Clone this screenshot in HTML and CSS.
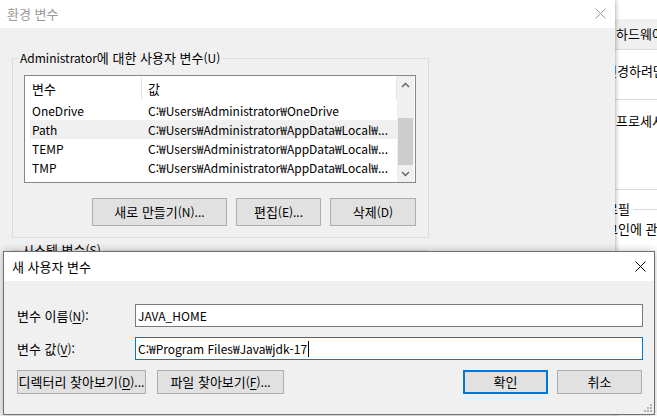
FILE: index.html
```html
<!DOCTYPE html>
<html lang="ko">
<head>
<meta charset="utf-8">
<title>환경 변수</title>
<link rel="stylesheet" href="styles.css">
</head>
<body>
<div class="sys">
  <div class="sys-top"></div>
  <div class="sys-tabs"><span class="k">하드웨어</span></div>
  <div class="sys-sec1"><span class="k cut10">변경하려면</span></div>
  <div class="sys-sec2"><span class="k cut2">프로세서</span></div>
  <div class="sys-grp"><span class="k cut21">프로필</span><span class="sys-line"></span></div>
  <div class="sys-txt"><span class="k cut21">로그인에 관련된</span></div>
</div>

<div class="env">
  <div class="env-title">
    <span class="k">환경 변수</span>
    <svg class="env-close" width="11" height="11" viewBox="0 0 11 11"><path d="M0.5 0.5 L10.5 10.5 M10.5 0.5 L0.5 10.5" stroke="#9a9a9a" stroke-width="1" fill="none"/></svg>
  </div>
  <fieldset class="group">
    <legend>Administrator<span class="k">에 대한 사용자 변수</span>(U)</legend>
    <div class="list">
      <div class="cols">
        <div class="list-head">
          <div class="hcell h1"><span class="k">변수</span></div>
          <div class="hcell h2"><span class="k">값</span></div>
        </div>
        <div class="rows">
          <div class="row"><span class="c">OneDrive</span><span class="c">C:₩Users₩Administrator₩OneDrive</span></div>
          <div class="row sel"><span class="c">Path</span><span class="c">C:₩Users₩Administrator₩AppData₩Local₩...</span></div>
          <div class="row"><span class="c">TEMP</span><span class="c">C:₩Users₩Administrator₩AppData₩Local₩...</span></div>
          <div class="row"><span class="c">TMP</span><span class="c">C:₩Users₩Administrator₩AppData₩Local₩...</span></div>
        </div>
      </div>
      <div class="sbar">
        <div class="sbtn"><svg width="9" height="6" viewBox="0 0 9 6"><path d="M1 5 L4.5 1.5 L8 5" stroke="#606060" stroke-width="1.4" fill="none"/></svg></div>
        <div class="strack"><div class="thumb"></div></div>
        <div class="sbtn"><svg width="9" height="6" viewBox="0 0 9 6"><path d="M1 1 L4.5 4.5 L8 1" stroke="#606060" stroke-width="1.4" fill="none"/></svg></div>
      </div>
    </div>
    <div class="btnrow">
      <button class="btn w135"><span class="k">새로 만들기</span>(N)...</button>
      <button class="btn w85"><span class="k">편집</span>(E)...</button>
      <button class="btn w86"><span class="k">삭제</span>(D)</button>
    </div>
  </fieldset>
  <fieldset class="group group2">
    <legend><span class="k">시스템 변수</span>(S)</legend>
  </fieldset>
</div>

<div class="dlg">
  <div class="dlg-title">
    <span class="k">새 사용자 변수</span>
    <svg class="dlg-close" width="11" height="11" viewBox="0 0 11 11"><path d="M0.5 0.5 L10.5 10.5 M10.5 0.5 L0.5 10.5" stroke="#000" stroke-width="1" fill="none"/></svg>
  </div>
  <div class="dlg-body">
    <div class="field">
      <label><span class="k">변수 이름</span>(<u>N</u>):</label>
      <div class="input">JAVA_HOME</div>
    </div>
    <div class="field">
      <label><span class="k">변수 값</span>(<u>V</u>):</label>
      <div class="input focus">C:₩Program Files₩Java₩jdk-17<span class="caret"></span></div>
    </div>
    <div class="dlg-btns">
      <button class="btn w129"><span class="k">디렉터리 찾아보기</span>(<u>D</u>)...</button>
      <button class="btn w127"><span class="k">파일 찾아보기</span>(<u>F</u>)...</button>
      <span class="spacer"></span>
      <button class="btn w85 default"><span class="k">확인</span></button>
      <button class="btn w85"><span class="k">취소</span></button>
    </div>
  </div>
  <svg class="grip" width="8" height="8" viewBox="0 0 8 8"><g fill="#b5b5b5"><rect x="6" y="0" width="2" height="2"/><rect x="3" y="3" width="2" height="2"/><rect x="6" y="3" width="2" height="2"/><rect x="0" y="6" width="2" height="2"/><rect x="3" y="6" width="2" height="2"/><rect x="6" y="6" width="2" height="2"/></g></svg>
</div>
</body>
</html>
```
FILE: styles.css
```css
* { box-sizing: border-box; }
body {
  margin: 0;
  width: 657px;
  height: 416px;
  overflow: hidden;
  position: relative;
  background: #fff;
  font: 12px/16px "Noto Sans CJK KR", "Noto Sans", sans-serif;
  color: #000;
}
.k { font-size: 13px; }

/* background system properties window */
.sys {
  position: absolute;
  left: 615px;
  top: 0;
  width: 42px;
  height: 416px;
  overflow: hidden;
  background: #fff;
  white-space: nowrap;
}
.sys-top { height: 19px; }
.sys-tabs {
  height: 31px;
  line-height: 30px;
  background: #f0f0f0;
  border-bottom: 1px solid #dadada;
  padding-left: 1px;
}
.sys-sec1 {
  height: 50px;
  padding-top: 13px;
  border-bottom: 1px solid #dadada;
}
.sys-sec2 {
  height: 90px;
  padding-top: 13px;
  border-bottom: 1px solid #dadada;
}
.sys-grp {
  margin-top: 11px;
  display: flex;
  align-items: center;
}
.sys-line { flex: 1; border-top: 1px solid #dadada; margin-left: 3px; }
.sys-txt { margin-top: 4px; }
.cut10 { margin-left: -10px; }
.cut2 { margin-left: 1px; }
.cut21 { margin-left: -21px; }

/* environment variables window */
.env {
  position: absolute;
  left: 0;
  top: 0;
  width: 615px;
  height: 430px;
  background: #f0f0f0;
  box-shadow: 1px 0 4px rgba(0, 0, 0, 0.3);
}
.env-title {
  height: 28px;
  background: #fff;
  display: flex;
  align-items: center;
  padding-left: 7px;
  color: #999;
}
.env-close { margin-left: auto; margin-right: 9px; margin-top: -1px; }

.group {
  margin: 22px 0 0 12px;
  width: 417px;
  padding: 9px 12px 11px 5px;
  border: 1px solid #dcdcdc;
  min-width: 0;
}
.group legend {
  padding: 0 2px;
  line-height: 16px;
}
.group2 { margin-top: 6px; height: 60px; }
.group2 legend { margin-left: 2px; line-height: 12px; }

.list {
  margin-left: 6px;
  width: 392px;
  height: 108px;
  border: 1px solid #828790;
  background: #fff;
  display: flex;
}
.cols { flex: 1; min-width: 0; }
.list-head {
  display: flex;
  height: 25px;
  padding: 1px 0;
}
.hcell {
  line-height: 23px;
  border-right: 1px solid #e5e5e5;
}
.h1 { width: 117px; padding-left: 7px; }
.h2 { flex: 1; padding-left: 6px; }
.rows { margin-left: 5px; }
.row {
  display: grid;
  grid-template-columns: 116px 1fr;
  height: 19px;
  line-height: 19px;
  white-space: nowrap;
}
.row .c { padding-left: 2px; overflow: hidden; }
.row.sel { background: #f0f0f0; }

.sbar {
  width: 17px;
  margin-right: 1px;
  background: #f0f0f0;
  display: flex;
  flex-direction: column;
}
.sbtn {
  height: 17px;
  display: flex;
  align-items: center;
  justify-content: center;
}
.strack {
  flex: 1;
  display: flex;
  flex-direction: column;
  justify-content: flex-end;
}
.thumb { height: 47px; margin: 0 1px; background: #cdcdcd; }

.btnrow {
  margin-top: 15px;
  display: flex;
  justify-content: flex-end;
  gap: 9px;
}
.btn {
  height: 28px;
  padding: 0;
  font: inherit;
  color: #000;
  background: #e1e1e1;
  border: 1px solid #adadad;
  text-align: center;
  white-space: nowrap;
}
.w135 { width: 135px; }
.w85 { width: 85px; }
.w86 { width: 86px; }
.w129 { width: 129px; }
.w127 { width: 127px; }

/* new user variable dialog */
.dlg {
  position: absolute;
  left: 3px;
  top: 251px;
  width: 652px;
  height: 164px;
  border: 1px solid #6f6f6f;
  background: #f0f0f0;
  box-shadow: 0 0 8px rgba(0, 0, 0, 0.25);
}
.dlg-title {
  height: 29px;
  background: #fff;
  display: flex;
  align-items: center;
  padding-left: 8px;
}
.dlg-close { margin-left: auto; margin-right: 8px; margin-top: -1px; }
.dlg-body { padding: 23px 10px 0 13px; }
.field {
  display: grid;
  grid-template-columns: 118px 508px;
  align-items: center;
  height: 23px;
  margin-bottom: 10px;
}
.field label { white-space: nowrap; }
u { text-underline-offset: 2px; }
.input {
  height: 23px;
  line-height: 21px;
  border: 1px solid #7a7a7a;
  background: #fff;
  padding-left: 2px;
  white-space: nowrap;
}
.input.focus { border-color: #0078d7; }
.caret {
  display: inline-block;
  width: 1px;
  height: 16px;
  background: #000;
  vertical-align: -3px;
  margin-left: 1px;
}
.dlg-btns {
  margin-top: 6px;
  display: flex;
  align-items: center;
  margin-right: 2px;
}
.dlg-btns .btn { height: 24px; }
.dlg-btns .w129 { margin-right: 11px; }
.spacer { flex: 1; }
.dlg-btns .default { border: 2px solid #0078d7; margin-right: 9px; }
.grip { position: absolute; right: 2px; bottom: 2px; }
```
